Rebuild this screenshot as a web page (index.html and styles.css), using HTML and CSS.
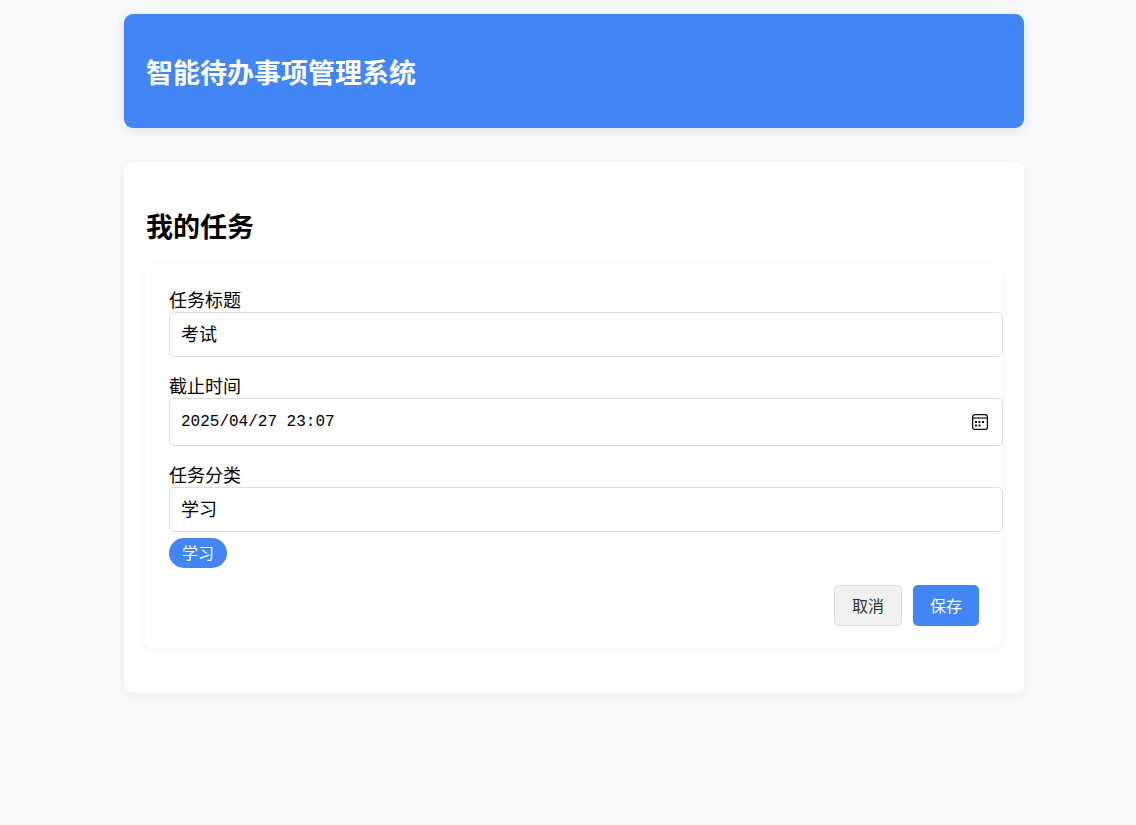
FILE: index.html
```html
<!DOCTYPE html>
<html lang="zh-CN">
<head>
    <meta charset="UTF-8">
    <meta name="viewport" content="width=device-width, initial-scale=1.0">
    <title>智能待办事项管理系统</title>
    <link rel="stylesheet" href="styles.css">
</head>
<body>

    <div class="container">
        <header class="header">
            <h1>智能待办事项管理系统</h1>
        </header>

        <main class="tasks">
            <h2>我的任务</h2>

            <form class="task-form">
                <div class="form-group">
                    <label for="title">任务标题</label>
                    <input type="text" id="title" value="考试">
                </div>

                <div class="form-group">
                    <label for="deadline">截止时间</label>
                    <div class="date-field">
                        <input type="text" id="deadline" class="date-input" value="2025/04/27 23:07">
                        <button type="button" class="date-picker" aria-label="选择日期">
                            <svg width="18" height="18" viewBox="0 0 18 18">
                                <rect x="1.6" y="1.6" width="14.8" height="14.8" rx="2.5" fill="none" stroke="#111" stroke-width="1.3"/>
                                <path d="M2 5h14" stroke="#111" stroke-width="1.2"/>
                                <path d="M4 8h2v2H4zM7.500 8h2v2h-2zM11 8h2v2h-2zM4 11.500h2v2H4zM7.500 11.500h2v2h-2z" fill="#111"/>
                            </svg>
                        </button>
                    </div>
                </div>

                <div class="form-group">
                    <label for="category">任务分类</label>
                    <input type="text" id="category" value="学习">
                    <div class="tags">
                        <span class="tag">学习</span>
                    </div>
                </div>

                <div class="form-actions">
                    <button type="button" class="btn btn-cancel">取消</button>
                    <button type="submit" class="btn btn-save">保存</button>
                </div>
            </form>
        </main>
    </div>

</body>
</html>
```
FILE: styles.css
```css
body {
    font-family: "Noto Sans CJK SC", sans-serif;
    font-size: 18px;
    line-height: 24px;
    background-color: #f8f9fa;
    color: #000;
    margin: 0;
    padding: 14px 0 14px 12px;
}

.container {
    max-width: 900px;
    margin: 0 auto;
}

.header {
    background-color: #4285f4;
    color: white;
    padding: 22px;
    margin-bottom: 34px;
    border-radius: 9px;
    box-shadow: 0 2px 11px rgba(0,0,0,0.1);
}

h1, h2 {
    font-size: 27px;
    line-height: 36px;
    margin: 0;
}

h1 {
    padding: 18px 0 16px;
}

.tasks {
    background-color: #fff;
    padding: 22px;
    border-radius: 9px;
    box-shadow: 0 2px 11px rgba(0,0,0,0.05);
}

h2 {
    padding: 24px 0 21px;
}

.task-form {
    padding: 22px 23px;
    margin-bottom: 23px;
    border-radius: 9px;
    box-shadow: 0 2px 11px rgba(0,0,0,0.05);
}

.form-group {
    margin-bottom: 16px;
}

label {
    display: block;
    margin-bottom: 1px;
}

/* padding and border are added on top of the full width */
input {
    display: block;
    box-sizing: content-box;
    width: 100%;
    height: 23px;
    padding: 8px 11px 12px;
    border: 1px solid #ddd;
    border-radius: 5px;
    background-color: #fff;
    color: #000;
    font-family: inherit;
    font-size: 18px;
}

.date-field {
    position: relative;
}

.date-input {
    height: 26px;
    padding: 10px 11px;
    font-family: "Liberation Mono", monospace;
    font-size: 16px;
}

.date-picker {
    position: absolute;
    top: 15px;
    right: -10px;
    width: 18px;
    height: 18px;
    padding: 0;
    border: none;
    background: none;
    cursor: pointer;
}

.date-picker svg {
    display: block;
}

.tags {
    display: flex;
    gap: 6px;
    margin-top: 6px;
}

.tag {
    background-color: #4285f4;
    color: white;
    font-size: 16px;
    padding: 2px 13px 4px;
    border-radius: 15px;
}

.form-actions {
    display: flex;
    justify-content: flex-end;
    gap: 11px;
    margin-top: 17px;
}

.btn {
    height: 41px;
    padding: 0 17px 2px;
    border: none;
    border-radius: 5px;
    font-family: inherit;
    font-size: 16px;
    cursor: pointer;
}

.btn-cancel {
    background-color: #f1f1f1;
    color: #333;
    border: 1px solid #ddd;
}

.btn-save {
    background-color: #4285f4;
    color: white;
}
```
